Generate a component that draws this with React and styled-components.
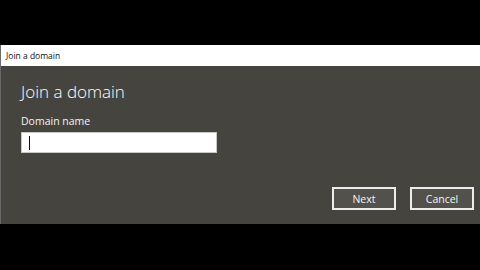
import React from 'react'
import styled, { createGlobalStyle } from 'styled-components'

const GlobalStyle = createGlobalStyle`
  html, body {
    margin: 0;
    padding: 0;
    background: #000;
  }
  body {
    font-family: 'Open Sans', 'Noto Sans', sans-serif;
  }
`

const Screen = styled.div`
  width: 480px;
  height: 270px;
  display: flex;
  flex-direction: column;
  padding-top: 45px;
  box-sizing: border-box;
  background: #000;
`

const Window = styled.div`
  display: flex;
  flex-direction: column;
  height: 179px;
  border-left: 1px solid #6a6a6a;
`

const TitleBar = styled.div`
  height: 21px;
  background: #fff;
  display: flex;
  align-items: center;
  padding-left: 5px;
  font-size: 8.5px;
  color: #111;
`

const Panel = styled.div`
  flex: 1;
  background: #46443f;
  display: flex;
  flex-direction: column;
  padding: 14px 6px 14px 20px;
`

const Heading = styled.h1`
  margin: 0;
  font-size: 17px;
  font-weight: 300;
  color: #ffffff;
  line-height: 24px;
  -webkit-font-smoothing: antialiased;
`

const Label = styled.div`
  margin-top: 10px;
  font-size: 10.5px;
  color: #f4f4f4;
  line-height: 14px;
`

const Input = styled.div`
  margin-top: 4px;
  width: 196px;
  height: 21px;
  box-sizing: border-box;
  background: #fff;
  border: 1px solid #c8c8c8;
  display: flex;
  align-items: center;
  padding-left: 7px;
`

const Caret = styled.span`
  width: 1px;
  height: 14px;
  background: #111;
`

const ButtonRow = styled.div`
  margin-top: auto;
  display: flex;
  justify-content: flex-end;
  gap: 14px;
`

const Button = styled.button`
  width: 64px;
  height: 23px;
  box-sizing: border-box;
  border: 2px solid #ececec;
  background: #53514c;
  color: #f4f4f4;
  font-family: 'Open Sans', 'Noto Sans', sans-serif;
  font-size: 10.5px;
  padding: 0;
`

export default function App() {
  return (
    <>
      <GlobalStyle />
      <Screen>
        <Window>
          <TitleBar>Join a domain</TitleBar>
          <Panel>
            <Heading>Join a domain</Heading>
            <Label>Domain name</Label>
            <Input>
              <Caret />
            </Input>
            <ButtonRow>
              <Button>Next</Button>
              <Button>Cancel</Button>
            </ButtonRow>
          </Panel>
        </Window>
      </Screen>
    </>
  )
}
